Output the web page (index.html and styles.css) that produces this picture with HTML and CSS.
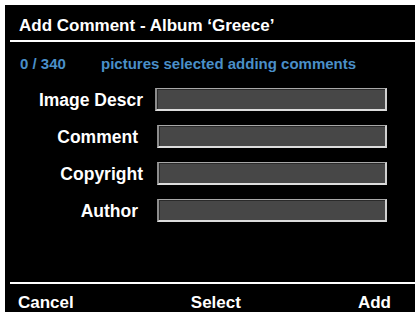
FILE: index.html
```html
<!DOCTYPE html>
<html>
<head>
<meta charset="utf-8">
<link rel="stylesheet" href="styles.css">
</head>
<body>
<div class="screen">
  <div class="title">Add Comment - Album ‘Greece’</div>
  <div class="rule"></div>
  <div class="status"><span class="count">0 / 340</span><span class="msg">pictures selected adding comments</span></div>
  <div class="form">
    <div class="label">Image Descr</div><div class="field"></div>
    <div class="label inset">Comment</div><div class="field shifted"></div>
    <div class="label">Copyright</div><div class="field shifted"></div>
    <div class="label inset">Author</div><div class="field shifted"></div>
  </div>
  <div class="footer">
    <div class="rule"></div>
    <div class="keys"><span>Cancel</span><span>Select</span><span>Add</span></div>
  </div>
</div>
</body>
</html>
```
FILE: styles.css
```css
html, body {
  margin: 0;
  padding: 0;
  background: #ffffff;
  overflow: hidden;
}
.screen {
  margin: 5px 0 0 5px;
  width: 410px;
  height: 307px;
  background: #000000;
  color: #ffffff;
  font-family: "Liberation Sans", Arial, sans-serif;
  font-weight: bold;
  display: flex;
  flex-direction: column;
  overflow: hidden;
}
.title {
  margin-top: 11px;
  padding-left: 14px;
  font-size: 17px;
  line-height: 19px;
}
.rule {
  margin: 5px 0 0 5px;
  height: 2px;
  background: #ffffff;
}
.status {
  margin-top: 13px;
  padding-left: 15px;
  font-size: 15px;
  line-height: 17px;
  color: #4a8fc8;
  display: flex;
}
.count {
  width: 81px;
}
.form {
  margin-top: 16px;
  display: grid;
  grid-template-columns: 138px 232px;
  column-gap: 12px;
  row-gap: 14px;
  align-items: center;
}
.label {
  text-align: right;
  font-size: 17.5px;
  line-height: 20px;
}
.label.inset {
  padding-right: 5px;
}
.field {
  height: 23px;
  box-sizing: border-box;
  background: #474747;
  border-top: 1px solid #a8a8a8;
  border-left: 2px solid #8c8c8c;
  border-bottom: 2px solid #dcdcdc;
  border-right: 2px solid #d0d0d0;
  box-shadow: inset 1px 1px 0 #2a2a2a;
}
.field.shifted {
  margin-left: 2px;
}
.footer {
  margin-top: auto;
  height: 30px;
}
.footer .rule {
  margin-top: 0;
}
.keys {
  display: flex;
  justify-content: space-between;
  padding: 9px 24px 0 13px;
  font-size: 17px;
  line-height: 19px;
}
```
